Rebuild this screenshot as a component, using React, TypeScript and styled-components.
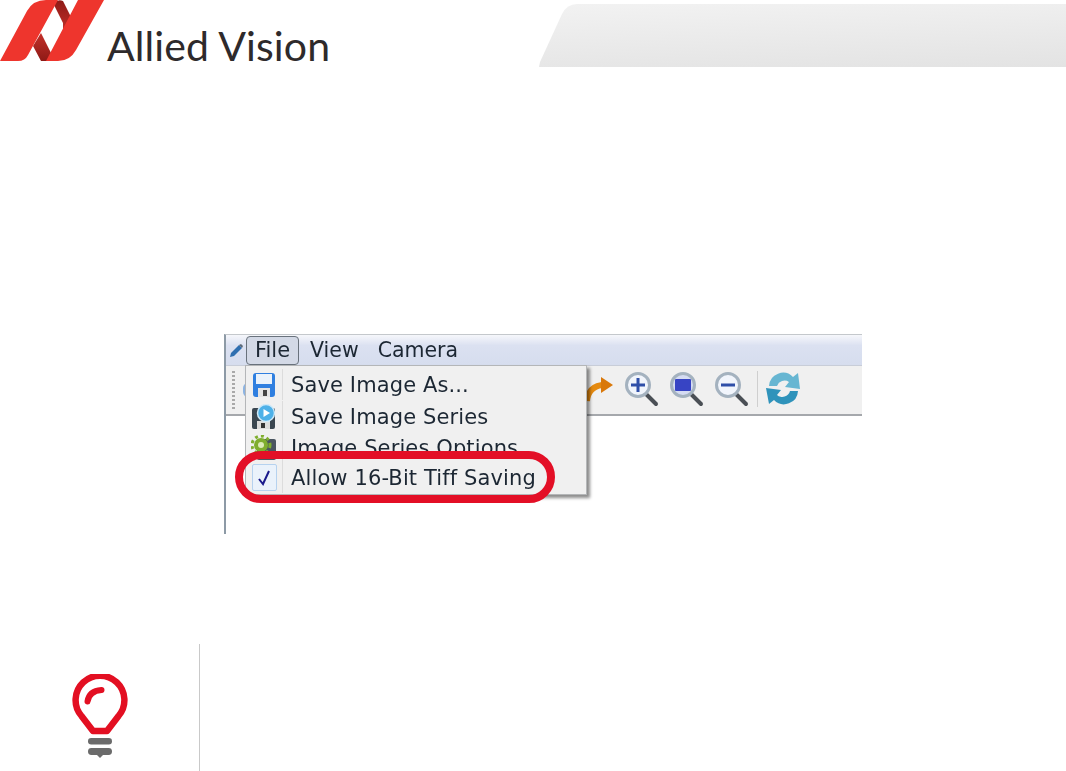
import styled, { createGlobalStyle } from "styled-components";

const GlobalStyle = createGlobalStyle`
  html, body {
    margin: 0;
    padding: 0;
    background: #ffffff;
  }
  body {
    font-family: "DejaVu Sans", sans-serif;
  }
`;

const menuItems = [
  { label: "Save Image As...", icon: <SaveIcon /> },
  { label: "Save Image Series", icon: <SeriesIcon /> },
  { label: "Image Series Options", icon: <OptionsIcon /> },
];

export default function App() {
  return (
    <Page>
      <GlobalStyle />
      <Header>
        <Brand>
          <LogoMark />
          <BrandName>Allied Vision</BrandName>
        </Brand>
        <HeaderTab />
      </Header>

      <Shot>
        <MenuBar>
          <PencilIcon />
          <FileMenu>File</FileMenu>
          <MenuName>View</MenuName>
          <MenuName>Camera</MenuName>
        </MenuBar>
        <Toolbar>
          <Gripper />
          <HiddenTool />
          <ToolIcons>
            <ArrowIcon />
            <ZoomIcon kind="in" />
            <ZoomIcon kind="fit" />
            <ZoomIcon kind="out" />
            <ToolSeparator />
            <RefreshIcon />
          </ToolIcons>
        </Toolbar>
        <Dropdown>
          {menuItems.map((item) => (
            <DropdownRow key={item.label}>
              <RowIcon>{item.icon}</RowIcon>
              <RowLabel>{item.label}</RowLabel>
            </DropdownRow>
          ))}
          <DropdownRow>
            <RowIcon>
              <CheckBox>
                <CheckIcon />
              </CheckBox>
            </RowIcon>
            <RowLabel>Allow 16-Bit Tiff Saving</RowLabel>
          </DropdownRow>
        </Dropdown>
        <Highlight />
      </Shot>

      <TipRow>
        <BulbIcon />
        <TipDivider />
      </TipRow>
    </Page>
  );
}

function LogoMark() {
  return (
    <svg width="105" height="62" viewBox="0 0 105 62" style={{ display: "block" }}>
      <defs>
        <linearGradient id="ribbon" x1="0" y1="0" x2="0" y2="1">
          <stop offset="0" stopColor="#8e1a16" />
          <stop offset="1" stopColor="#c4302a" />
        </linearGradient>
        <linearGradient id="ribbonLow" x1="0" y1="0" x2="0" y2="1">
          <stop offset="0" stopColor="#c4302a" />
          <stop offset="1" stopColor="#8e1a16" />
        </linearGradient>
      </defs>
      <path d="M53 3 Q58 -1 63 1 L71 17 L63 33 L63 23 Z" fill="url(#ribbon)" />
      <path d="M41 33 L52 55 L47 61 L41 61 L33 46 Z" fill="url(#ribbonLow)" />
      <path d="M0 61 L27 11 Q33 0 46 0 L58 0 L28 55 Q25 61 18 61 Z" fill="#ee352d" />
      <path d="M78 0 L104 0 L76 50 Q70 61 58 61 L46 61 Z" fill="#ee352d" />
    </svg>
  );
}

function PencilIcon() {
  return (
    <svg width="15" height="15" viewBox="0 0 15 15" style={{ flex: "none" }}>
      <path d="M1 14 L2 10 L10 2 L13 5 L5 13 Z" fill="#2f6fb0" />
      <path d="M10 2 L12 1 L14 3 L13 5 Z" fill="#5c6a78" />
    </svg>
  );
}

function SaveIcon() {
  return (
    <svg width="24" height="26" viewBox="0 0 24 26">
      <rect x="1" y="1" width="22" height="24" rx="3" fill="#2f7fe0" />
      <rect x="4" y="2" width="16" height="10" fill="#eaf2fb" />
      <rect x="6" y="16" width="12" height="9" fill="#e4e4e4" />
      <rect x="11" y="18" width="4" height="6" fill="#444" />
    </svg>
  );
}

function SeriesIcon() {
  return (
    <svg width="26" height="26" viewBox="0 0 26 26">
      <rect x="1" y="4" width="23" height="21" rx="2" fill="#3a4650" />
      <rect x="6" y="17" width="13" height="8" fill="#dcdcdc" />
      <rect x="10" y="19" width="4" height="5" fill="#333" />
      <circle cx="15" cy="9" r="8.5" fill="#4eb1e8" stroke="#cfe9f8" strokeWidth="1.5" />
      <path d="M12.5 5 L19 9 L12.5 13 Z" fill="#ffffff" />
    </svg>
  );
}

function OptionsIcon() {
  return (
    <svg width="26" height="26" viewBox="0 0 26 26">
      <rect x="6" y="4" width="19" height="21" rx="2" fill="#4a5560" />
      <circle cx="10" cy="10" r="7" fill="#7fae2e" />
      <circle cx="10" cy="10" r="9" fill="none" stroke="#7fae2e" strokeWidth="3" strokeDasharray="3 3" />
      <circle cx="10" cy="10" r="3" fill="#dcebb8" />
    </svg>
  );
}

function CheckIcon() {
  return (
    <svg width="14" height="16" viewBox="0 0 14 16">
      <path d="M2 9 L6 14 L12 1" fill="none" stroke="#1a1a8c" strokeWidth="2" />
    </svg>
  );
}

function ArrowIcon() {
  return (
    <svg width="28" height="26" viewBox="0 0 28 26" style={{ flex: "none" }}>
      <path d="M1 25 Q2 11 16 9" fill="none" stroke="#e58a10" strokeWidth="6" />
      <path d="M15 1 L27 9 L15 17 Z" fill="#d9780a" />
    </svg>
  );
}

function ZoomIcon({ kind }: { kind: "in" | "fit" | "out" }) {
  return (
    <svg width="35" height="36" viewBox="0 0 35 36" style={{ flex: "none" }}>
      <path d="M22 23 L32 33" stroke="#4a4f55" strokeWidth="4" strokeLinecap="round" />
      <circle cx="14" cy="14" r="11.5" fill={kind === "fit" ? "#d5dcf2" : "#f1f5fc"} stroke="#a4b2bf" strokeWidth="3" />
      {kind === "fit" && <rect x="6" y="8" width="16" height="12" rx="1" fill="#3744c4" />}
      {kind !== "fit" && <rect x="7" y="12.5" width="14" height="3" fill="#2f4fa8" />}
      {kind === "in" && <rect x="12.5" y="7" width="3" height="14" fill="#2f4fa8" />}
    </svg>
  );
}

function RefreshIcon() {
  return (
    <svg width="37" height="37" viewBox="0 0 37 37" style={{ flex: "none" }}>
      <path d="M4 16 A14 14 0 0 1 28 7 L33 3 L35 19 L20 17 L24 12 A8 8 0 0 0 12 16 Z" fill="#67b6d2" />
      <path d="M33 21 A14 14 0 0 1 9 30 L4 34 L1 18 L16 20 L12 25 A8 8 0 0 0 25 21 Z" fill="#2f93bb" />
    </svg>
  );
}

function BulbIcon() {
  return (
    <svg width="56" height="84" viewBox="0 0 56 84" style={{ flex: "none", marginTop: 30 }}>
      <path
        d="M21 57 L35 57 L46.5 42 A24.4 24.4 0 1 0 9.5 42 Z"
        fill="none"
        stroke="#e30f22"
        strokeWidth="6.5"
        strokeLinejoin="round"
      />
      <path d="M15.5 27.5 Q17 17 29.5 16" fill="none" stroke="#e30f22" strokeWidth="6" strokeLinecap="round" />
      <rect x="16" y="64" width="24" height="6.5" rx="3.2" fill="#6b6b6b" />
      <rect x="16" y="74" width="24" height="7" rx="3.4" fill="#6b6b6b" />
      <path d="M25 81 L31 81 L28 84 Z" fill="#6b6b6b" />
    </svg>
  );
}

const Page = styled.div`
  width: 1066px;
  height: 771px;
  overflow: hidden;
  display: flex;
  flex-direction: column;
  background: #ffffff;
`;

const Header = styled.header`
  display: flex;
  justify-content: space-between;
  align-items: flex-end;
  height: 67px;
  flex: none;
`;

const Brand = styled.div`
  display: flex;
  align-items: flex-end;
  height: 67px;
  padding-bottom: 5px;
  box-sizing: border-box;
`;

const BrandName = styled.span`
  font-family: "Lato", sans-serif;
  font-weight: 400;
  font-size: 41px;
  line-height: 42px;
  color: #2e2a2b;
  margin-left: 2px;
  margin-bottom: -5px;
  letter-spacing: 0.1px;
  white-space: nowrap;
`;

const HeaderTab = styled.div`
  width: 527px;
  height: 63px;
  background: linear-gradient(178deg, #f2f2f2 0%, #e3e3e3 100%);
  clip-path: path("M0 63 L1 58 L23 10 Q28 0 38 0 L527 0 L527 63 Z");
`;

const Shot = styled.div`
  position: relative;
  flex: none;
  width: 638px;
  height: 200px;
  margin: 267px 0 0 224px;
  box-sizing: border-box;
  border-top: 1px solid #c4c8cc;
  border-left: 2px solid #8d9aa6;
  background: #ffffff;
  filter: blur(0.5px);
`;

const MenuBar = styled.div`
  display: flex;
  align-items: center;
  height: 30px;
  padding-left: 3px;
  background: linear-gradient(180deg, #f6f7fb 0%, #dbe1f1 35%, #d6ddee 100%);
  border-bottom: 1px solid #c8cdd8;
`;

const MenuName = styled.span`
  font-size: 20.5px;
  line-height: 28px;
  color: #1c2733;
  margin-left: 11px;
  &:last-child {
    margin-left: 19px;
  }
`;

const FileMenu = styled.span`
  box-sizing: border-box;
  width: 53px;
  height: 29px;
  margin-left: 2px;
  text-align: center;
  font-size: 21px;
  line-height: 27px;
  color: #1c2733;
  background: #d3d9e6;
  border: 1px solid #69727c;
  border-radius: 4px;
`;

const Toolbar = styled.div`
  display: flex;
  align-items: center;
  height: 48px;
  background: #f0f0f0;
  border-bottom: 2px solid #a5a8ac;
`;

const Gripper = styled.div`
  width: 3px;
  height: 38px;
  margin-left: 6px;
  background: repeating-linear-gradient(180deg, #a9a9a9 0 2px, transparent 2px 4px);
`;

const HiddenTool = styled.div`
  width: 10px;
  height: 14px;
  margin-left: 8px;
  border-radius: 5px;
  background: #8db4e2;
`;

const ToolIcons = styled.div`
  display: flex;
  align-items: center;
  gap: 10px;
  margin: -3px 0 0 333px;
`;

const ToolSeparator = styled.div`
  width: 1px;
  height: 36px;
  background: #cfcfcf;
  margin: 0 -3px 0 -2px;
`;

const Dropdown = styled.div`
  position: absolute;
  left: 19px;
  top: 30px;
  width: 342px;
  height: 130px;
  padding-top: 3px;
  box-sizing: border-box;
  background: #f0f0f0;
  border: 1px solid #b4b6b8;
  box-shadow: 3px 3px 3px rgba(0, 0, 0, 0.45);
`;

const DropdownRow = styled.div`
  display: flex;
  align-items: center;
  height: 31px;
  &:nth-child(2) {
    margin-top: 1px;
  }
  &:last-child {
    margin-top: -1px;
  }
`;

const RowIcon = styled.div`
  display: flex;
  align-items: center;
  justify-content: center;
  flex: none;
  box-sizing: border-box;
  width: 37px;
  height: 31px;
  border-right: 1px solid #dcdcdc;
`;

const RowLabel = styled.span`
  margin-left: 8px;
  font-size: 21px;
  line-height: 28px;
  letter-spacing: 0.12px;
  color: #1c2733;
  white-space: nowrap;
`;

const CheckBox = styled.div`
  display: flex;
  align-items: center;
  justify-content: center;
  box-sizing: border-box;
  width: 25px;
  height: 27px;
  background: #eaf2fb;
  border: 1px solid #b6d2ef;
  border-radius: 2px;
`;

const Highlight = styled.div`
  position: absolute;
  left: 9px;
  top: 116px;
  box-sizing: border-box;
  width: 320px;
  height: 52px;
  border: 8px solid #e30f26;
  border-radius: 26px;
`;

const TipRow = styled.div`
  display: flex;
  align-items: flex-start;
  flex: none;
  height: 127px;
  margin-top: 110px;
  padding-left: 72px;
`;

const TipDivider = styled.div`
  width: 1px;
  height: 127px;
  margin-left: 71px;
  background: #c9c9c9;
`;
